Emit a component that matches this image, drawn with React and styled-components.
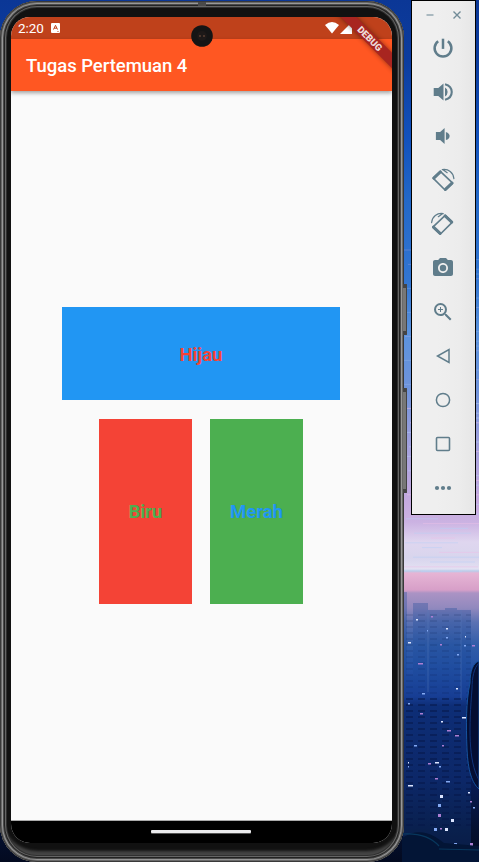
import React from 'react';
import styled, { createGlobalStyle } from 'styled-components';
import { MdPhotoCamera, MdZoomIn } from 'react-icons/md';

const GlobalStyle = createGlobalStyle`
  * { box-sizing: border-box; }
  body { margin: 0; overflow: hidden; font-family: Roboto, sans-serif; }
`;

const Desktop = styled.main`
  position: relative;
  isolation: isolate;
  display: flex;
  align-items: flex-start;
  gap: 7px;
  width: 479px;
  height: 862px;
  overflow: hidden;
  background: linear-gradient(
    #0b3796 0, #0c3c9e 60px, #1252bd 140px, #2368c8 200px, #3275d0 280px,
    #5c93dd 335px, #6f93db 390px, #a6a2dd 450px, #c4a9de 500px, #cbb2e2 522px,
    #dfd6ef 542px, #d8d5ed 558px, #e3e0f2 569px, #b8cdea 571px, #e6b5d5 573px,
    #d79fc8 590px, #ab93c4 593px, #9189be 608px, #5c72b3 622px, #315da9 645px,
    #224fa4 670px, #183b94 696px, #0a246a 706px, #081b55 780px, #04102f 830px, #030a20 862px
  );
`;

const Scenery = styled.svg`
  position: absolute;
  inset: 0;
  z-index: -1;
`;

const Phone = styled.section`
  position: relative;
  display: flex;
  flex: none;
  width: 404px;
  height: 861px;
  margin-top: 1px;
  padding: 16px 12px 18px 11px;
  border-radius: 37px;
  background: #111;
  box-shadow:
    inset 0 0 0 1px #393939,
    inset 0 0 0 2px #696969,
    inset 0 0 0 3px #989898,
    inset 0 0 0 4px #4a4a4a,
    inset 0 0 0 5px #232323,
    inset 0 0 0 6px #656565,
    inset 0 0 0 7px #303030,
    inset 0 -9px 3px 2px #454545;
`;

const SideButton = styled.span`
  position: absolute;
  left: 403px;
  top: ${({ $top }) => $top}px;
  width: 4px;
  height: ${({ $height }) => $height}px;
  border: solid #444;
  border-width: 4px 1px 4px 0;
  border-radius: 0 1px 1px 0;
  background: #777;
`;

const Speaker = styled.span`
  position: absolute;
  left: 198px;
  top: 1px;
  width: 8px;
  height: 4px;
  background: #4a4a4a;
`;

const Screen = styled.div`
  position: relative;
  display: flex;
  flex-direction: column;
  width: 381px;
  height: 826px;
  overflow: hidden;
  border-radius: 19px;
  background: #fafafa;
`;

const StatusBar = styled.div`
  display: flex;
  flex: none;
  align-items: center;
  height: 22px;
  padding: 0 40px 0 7px;
  background: #bf411b;
  color: #fff;
`;

const Clock = styled.time`
  width: 32px;
  font-size: 13.5px;
  line-height: 22px;
  letter-spacing: -0.1px;
`;

const StatusIcons = styled.div`
  display: flex;
  gap: 1px;
  margin-left: auto;
`;

const AppBar = styled.header`
  z-index: 1;
  display: flex;
  flex: none;
  align-items: center;
  height: 52px;
  padding: 2px 0 0 15px;
  background: #ff5722;
  box-shadow: 0 2px 4px rgba(0, 0, 0, 0.36);
`;

const Title = styled.h1`
  margin: 0;
  color: #fff;
  font-size: 18.5px;
  font-weight: 500;
  letter-spacing: -0.03px;
`;

const Body = styled.div`
  display: flex;
  flex: 1;
  flex-direction: column;
  align-items: center;
  justify-content: center;
  gap: 18.6px;
  padding-right: 1.2px;
  border-bottom: 1px solid #aaa;
`;

const BoxRow = styled.div`
  display: flex;
  gap: 18.6px;
`;

const Box = styled.div`
  display: flex;
  align-items: center;
  justify-content: center;
  width: ${({ $wide }) => ($wide ? 277.8 : 92.6)}px;
  height: ${({ $wide }) => ($wide ? 92.6 : 185.2)}px;
  padding-top: ${({ $wide }) => ($wide ? 2 : 1)}px;
  background: ${({ $fill }) => $fill};
  color: ${({ $ink }) => $ink};
  font-size: 18.5px;
  font-weight: 700;
`;

const NavigationBar = styled.footer`
  display: flex;
  flex: none;
  justify-content: center;
  height: 22px;
  padding-top: 9px;
  background: #000;
`;

const HomePill = styled.span`
  width: 100px;
  height: 3px;
  margin-right: 1px;
  border-radius: 1px;
  background: #ececee;
  box-shadow: 0 1px #555;
`;

const Camera = styled.svg`
  position: absolute;
  top: 8px;
  left: 180px;
  z-index: 2;
`;

const DebugBanner = styled.span`
  position: absolute;
  top: 16px;
  right: -28px;
  z-index: 2;
  width: 100px;
  height: 11px;
  transform: rotate(45deg);
  background: #a82520;
  box-shadow: 0 0 5px rgba(0, 0, 0, 0.45);
  color: #eedcda;
  font-size: 9.5px;
  font-weight: 900;
  line-height: 11px;
  text-align: center;
`;

const Toolbar = styled.aside`
  display: flex;
  flex: none;
  flex-direction: column;
  align-items: center;
  width: 65px;
  height: 515px;
  border: 1px solid #000;
  background: linear-gradient(90deg, #efefef 40%, #ececec 75%, #e6e6e6);
  color: #607d8b;
`;

const WindowControls = styled.div`
  display: flex;
  justify-content: center;
  gap: 15px;
  width: 100%;
  height: 25px;
  padding: 8px 0 0 0;
`;

const ToolButton = styled.button`
  display: flex;
  align-items: center;
  justify-content: center;
  width: 44px;
  height: 44px;
  margin-right: 1px;
  padding: 0;
  border: 0;
  background: none;
  color: inherit;
`;

const Glyph = ({ children }) => (
  <svg width="24" height="24" viewBox="0 0 24 24" fill="none" stroke="currentColor" strokeWidth="1.7">
    {children}
  </svg>
);

const Rotate = ({ mirrored }) => (
  <Glyph>
    <g transform={mirrored ? 'translate(23.5 0) scale(-1 1)' : undefined} strokeLinejoin="round" strokeLinecap="round">
      <path d="M9.3 3.3 2.1 10.1 14.3 22.2 21.7 15.2Z" strokeWidth="1.6" />
      <path d="M9.4 3.9 2.8 10.1M21 15.1 14.4 21.4" strokeWidth="2.9" />
      <path d="M11.3 1.6C17.4.6 22.4 4.6 22.9 10.6M12 1.8l4.2 2.9" strokeWidth="1.2" />
    </g>
  </Glyph>
);

const tools = [
  ['Power', (
    <Glyph>
      <path d="M7.2 5.3a8.4 8.4 0 1 0 9.6 0" strokeWidth="2.5" />
      <path d="M12 2.7v10.2" strokeWidth="2.5" />
    </Glyph>
  )],
  ['Volume up', (
    <Glyph>
      <path d="M2.7 8h4.6l5.2-4.4v16.8L7.3 16H2.7Z" fill="currentColor" stroke="none" />
      <path d="M14 7.6a5 5 0 0 1 0 8.8Z" fill="currentColor" stroke="none" />
      <path d="M14 4.2c9 2.4 9 13.2 0 15.6" strokeWidth="2.1" />
    </Glyph>
  )],
  ['Volume down', (
    <Glyph>
      <path d="M4.9 8.1h4.2L13.6 4v16l-4.5-4.1H4.9Z" fill="currentColor" stroke="none" />
      <path d="M14.9 7.9c5 1.6 5 6.6 0 8.2Z" fill="currentColor" stroke="none" />
    </Glyph>
  )],
  ['Rotate left', <Rotate />],
  ['Rotate right', <Rotate mirrored />],
  ['Screenshot', <MdPhotoCamera size={24} />],
  ['Zoom', <MdZoomIn size={24} />],
  ['Back', <Glyph><path d="M18 5.5v13L6.5 12Z" strokeWidth="1.5" /></Glyph>],
  ['Home', <Glyph><circle cx="12" cy="12" r="6.6" strokeWidth="1.5" /></Glyph>],
  ['Overview', <Glyph><rect x="5.5" y="5.5" width="13" height="13" rx="1" strokeWidth="1.6" /></Glyph>],
  ['More', (
    <Glyph>
      <g fill="currentColor" stroke="none">
        <circle cx="6" cy="12" r="2.1" /><circle cx="12" cy="12" r="2.1" /><circle cx="18" cy="12" r="2.1" />
      </g>
    </Glyph>
  )],
];

const lights = [
  [416, 619, 2], [427, 630, 1], [431, 616, 2], [446, 628, 2], [446, 637, 2], [440, 644, 2],
  [465, 636, 1], [464, 645, 2], [472, 645, 3], [408, 642, 3], [457, 654, 2], [418, 663, 5],
  [456, 688, 2], [422, 693, 3], [420, 713, 3], [441, 721, 2], [414, 745, 3], [442, 745, 2],
  [408, 762, 1], [408, 766, 1], [428, 763, 3], [435, 762, 4], [439, 766, 2], [435, 778, 3],
  [440, 795, 3], [438, 804, 3], [438, 814, 3], [451, 819, 3], [434, 828, 3], [440, 828, 2],
  [445, 828, 3], [454, 843, 3], [470, 801, 2], [468, 792, 2], [473, 807, 2], [470, 843, 3],
  [408, 785, 5], [446, 781, 4], [455, 735, 4], [462, 717, 4], [408, 703, 2], [447, 730, 4],
];

const clouds = Array.from({ length: 68 }, (_, i) => ({
  y: 250 + i * 4.8,
  x: 400 + ((i * 17) % 43),
  width: 20 + ((i * 29) % 62),
  pink: i % 3 === 0,
}));

const City = () => (
  <Scenery width="479" height="862" viewBox="0 0 479 862">
    {clouds.map(({ y, x, width, pink }) => (
      <path key={y} d={`M${x} ${y}h${width}`} stroke={pink ? '#edc0e8' : '#b9d0f7'} strokeWidth="1" opacity={y > 400 ? 0.5 : 0.22} />
    ))}
    <path d="M403 592h4v270h-4ZM413 603h15v7h17v-2h12v2h14v252H403V675h10Z" fill="#174494" opacity=".3" />
    <path d="M428 610v82M461 610v90" stroke="#5c7fbd" opacity=".4" />
    {Array.from({ length: 36 }, (_, i) => (
      <path key={i} d={`M406 ${615 + i * 6}h65`} stroke="#061748" strokeWidth="2" strokeDasharray="7 5" opacity={i < 14 ? 0.12 : 0.5} />
    ))}
    {lights.map(([x, y, w], i) => (
      <rect key={`${x}-${y}`} x={x} y={y} width={w} height={w === 3 && y > 790 ? 3 : 1.5} fill={['#dce5ff', '#84a9f3', '#ac7ed3'][i % 3]} />
    ))}
    <path d="M479 661c-6 2-9 10-9 22-4 19-4 41-3 66 1 22 5 34 12 40Z" fill="#040e32" stroke="#1553a0" />
    <path d="M479 663c-5 5-7 14-7 26-3 37-4 72 7 91" fill="none" stroke="#0f347b" />
    <path d="M402 838c18-12 32-3 42 5l35 3v16h-77Z" fill="#031536" />
    <path d="M403 834c17-1 28 3 36 12m0 3 40 1" fill="none" stroke="#0a466d" strokeWidth="1.2" opacity=".7" />
  </Scenery>
);

export default function App() {
  return (
    <>
      <GlobalStyle />
      <Desktop>
        <City />
        <Phone>
          <Speaker />
          <SideButton $top={283} $height={51} />
          <SideButton $top={387} $height={105} />
          <Screen>
            <StatusBar>
              <Clock>2:20</Clock>
              <svg width="11" height="11" viewBox="0 0 11 11">
                <rect x="1" y="0" width="9" height="10" rx="1" fill="#fff" />
                <path d="M3.5 6.5 5.5 2.3 7.5 6.5M4.2 5.2h2.6M7.5 8.5h1" fill="none" stroke="#bf411b" strokeWidth="1" />
              </svg>
              <StatusIcons>
                <svg width="14" height="12" viewBox="0 0 14 12"><path d="M0 3Q7-3 14 3L7 11.5Z" fill="#fff" /></svg>
                <svg width="12" height="12" viewBox="0 0 12 12"><path d="M12 0v12H0Z" fill="#fff" /></svg>
              </StatusIcons>
            </StatusBar>
            <AppBar><Title>Tugas Pertemuan 4</Title></AppBar>
            <Body>
              <Box $wide $fill="#2196f3" $ink="#f44336">Hijau</Box>
              <BoxRow>
                <Box $fill="#f44336" $ink="#4caf50">Biru</Box>
                <Box $fill="#4caf50" $ink="#2196f3">Merah</Box>
              </BoxRow>
            </Body>
            <NavigationBar><HomePill /></NavigationBar>
            <Camera width="22" height="22" viewBox="0 0 22 22">
              <circle cx="11" cy="11" r="10.8" fill="#151515" />
              <circle cx="11" cy="11" r="5" fill="#1d1918" />
              <path d="M9 10v2M13 10v2" stroke="#76523f" />
            </Camera>
            <DebugBanner>DEBUG</DebugBanner>
          </Screen>
        </Phone>
        <Toolbar>
          <WindowControls>
            <svg width="12" height="12" viewBox="0 0 12 12"><path d="M2.5 6h7" stroke="#9eafb7" strokeWidth="1.7" /></svg>
            <svg width="12" height="12" viewBox="0 0 12 12"><path d="m2.5 2.5 7 7m0-7-7 7" stroke="#718b97" strokeWidth="1.4" /></svg>
          </WindowControls>
          {tools.map(([label, icon]) => <ToolButton key={label} aria-label={label}>{icon}</ToolButton>)}
        </Toolbar>
      </Desktop>
    </>
  );
}
